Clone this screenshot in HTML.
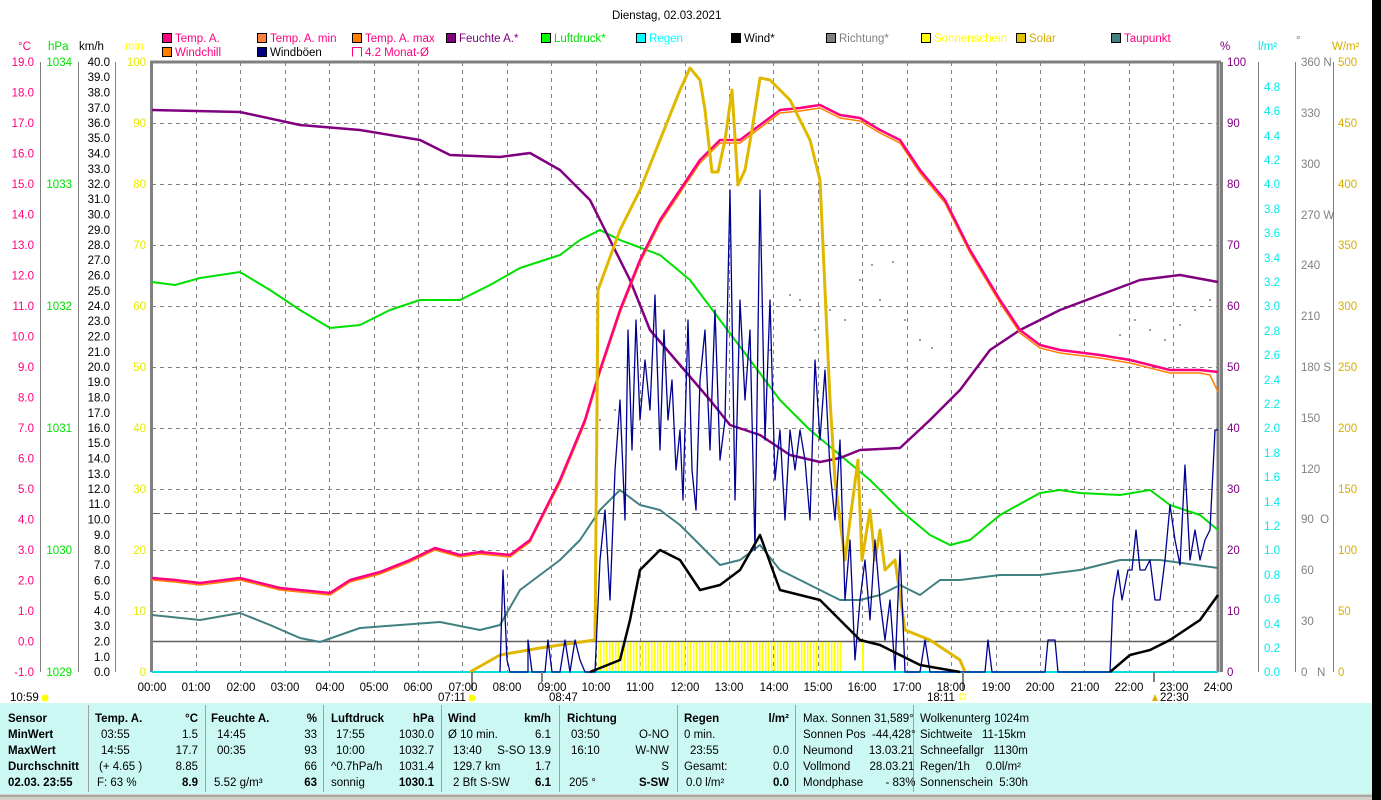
<!DOCTYPE html>
<html><head><meta charset="utf-8"><style>
html,body{margin:0;padding:0;background:#fff;width:1381px;height:800px;overflow:hidden}
svg{display:block}
text{font-family:"Liberation Sans",sans-serif;font-size:11.5px}
.b{font-weight:bold}
</style></head><body>
<svg width="1381" height="800" viewBox="0 0 1381 800">
<rect x="1372" y="0" width="9" height="800" fill="#000"/>
<text x="612" y="19" font-size="14">Dienstag, 02.03.2021</text>
<!-- legend -->
<g stroke="#000" stroke-width="1">
<rect x="162.5" y="33.5" width="9" height="9" fill="#ff0080"/>
<rect x="257.5" y="33.5" width="9" height="9" fill="#ff8040"/>
<rect x="352.5" y="33.5" width="9" height="9" fill="#ff8000"/>
<rect x="446.5" y="33.5" width="9" height="9" fill="#800080"/>
<rect x="541.5" y="33.5" width="9" height="9" fill="#00ff00"/>
<rect x="636.5" y="33.5" width="9" height="9" fill="#00ffff"/>
<rect x="731.5" y="33.5" width="9" height="9" fill="#000"/>
<rect x="826.5" y="33.5" width="9" height="9" fill="#808080"/>
<rect x="921.5" y="33.5" width="9" height="9" fill="#ffff00"/>
<rect x="1016.5" y="33.5" width="9" height="9" fill="#e0c000"/>
<rect x="1111.5" y="33.5" width="9" height="9" fill="#408080"/>
<rect x="162.5" y="47.5" width="9" height="9" fill="#ff8000"/>
<rect x="257.5" y="47.5" width="9" height="9" fill="#000080"/>
</g>
<path d="M352.5 56.5V47.5H361.5V56.5" fill="none" stroke="#ff0080"/>
<g>
<text x="175" y="42" fill="#ff0080">Temp. A.</text>
<text x="270" y="42" fill="#ff0080">Temp. A. min</text>
<text x="365" y="42" fill="#ff0080">Temp. A. max</text>
<text x="459" y="42" fill="#800080">Feuchte A.*</text>
<text x="554" y="42" fill="#00e000">Luftdruck*</text>
<text x="649" y="42" fill="#00ffff">Regen</text>
<text x="744" y="42" fill="#000">Wind*</text>
<text x="839" y="42" fill="#808080">Richtung*</text>
<text x="934" y="42" fill="#ffff00">Sonnenschein</text>
<text x="1029" y="42" fill="#d4b000">Solar</text>
<text x="1124" y="42" fill="#ff0080">Taupunkt</text>
<text x="175" y="56" fill="#ff0080">Windchill</text>
<text x="270" y="56" fill="#000">Windböen</text>
<text x="365" y="56" fill="#ff0080">4.2 Monat-Ø</text>
</g>
<!-- axis headers -->
<text x="18" y="50" fill="#ff0080">°C</text>
<text x="48" y="50" fill="#00e000">hPa</text>
<text x="79" y="50" fill="#000">km/h</text>
<text x="125" y="50" fill="#ffff00">min</text>
<text x="1220" y="50" fill="#800080">%</text>
<text x="1258" y="50" fill="#00e0e0">l/m²</text>
<text x="1296" y="44" fill="#808080">°</text>
<text x="1332" y="50" fill="#d4b000">W/m²</text>
<!-- grid -->
<g stroke="#808080" stroke-dasharray="4,4" stroke-width="1">
<path d="M196.5 62V672M240.5 62V672M285.5 62V672M329.5 62V672M374.5 62V672M418.5 62V672M462.5 62V672M507.5 62V672M551.5 62V672M596.5 62V672M640.5 62V672M685.5 62V672M729.5 62V672M773.5 62V672M818.5 62V672M862.5 62V672M907.5 62V672M951.5 62V672M996.5 62V672M1040.5 62V672M1084.5 62V672M1129.5 62V672M1173.5 62V672"/>
<path d="M152 123.5H1218M152 184.5H1218M152 245.5H1218M152 306.5H1218M152 367.5H1218M152 428.5H1218M152 489.5H1218M152 550.5H1218M152 611.5H1218"/>
</g>
<path d="M152 513.5H1218" stroke="#606060" stroke-dasharray="8,4"/>
<path d="M152 641.5H1218" stroke="#606060" stroke-width="1.5"/>
<path d="M150 62H1221M151.5 62V672M1218 62V672M1221.5 62V672" stroke="#808080" stroke-width="3" fill="none"/>
<!-- left axes -->
<g stroke="#808080"><path d="M40.5 62V672M78.5 62V672M115.5 62V672"/></g>
<g fill="#ff0080" text-anchor="end">
<text x="34" y="66">19.0</text><text x="34" y="96.5">18.0</text><text x="34" y="127">17.0</text><text x="34" y="157.5">16.0</text><text x="34" y="188">15.0</text><text x="34" y="218.5">14.0</text><text x="34" y="249">13.0</text><text x="34" y="279.5">12.0</text><text x="34" y="310">11.0</text><text x="34" y="340.5">10.0</text><text x="34" y="371">9.0</text><text x="34" y="401.5">8.0</text><text x="34" y="432">7.0</text><text x="34" y="462.5">6.0</text><text x="34" y="493">5.0</text><text x="34" y="523.5">4.0</text><text x="34" y="554">3.0</text><text x="34" y="584.5">2.0</text><text x="34" y="615">1.0</text><text x="34" y="645.5">0.0</text><text x="34" y="676">-1.0</text>
</g>
<g fill="#00e000" text-anchor="end">
<text x="72" y="66">1034</text><text x="72" y="188">1033</text><text x="72" y="310">1032</text><text x="72" y="432">1031</text><text x="72" y="554">1030</text><text x="72" y="676">1029</text>
</g>
<g fill="#000" text-anchor="end" font-size="11">
<text x="110" y="66">40.0</text><text x="110" y="81">39.0</text><text x="110" y="96.5">38.0</text><text x="110" y="112">37.0</text><text x="110" y="127">36.0</text><text x="110" y="142">35.0</text><text x="110" y="157.5">34.0</text><text x="110" y="173">33.0</text><text x="110" y="188">32.0</text><text x="110" y="203">31.0</text><text x="110" y="218.5">30.0</text><text x="110" y="234">29.0</text><text x="110" y="249">28.0</text><text x="110" y="264">27.0</text><text x="110" y="279.5">26.0</text><text x="110" y="295">25.0</text><text x="110" y="310">24.0</text><text x="110" y="325">23.0</text><text x="110" y="340.5">22.0</text><text x="110" y="356">21.0</text><text x="110" y="371">20.0</text><text x="110" y="386">19.0</text><text x="110" y="401.5">18.0</text><text x="110" y="417">17.0</text><text x="110" y="432">16.0</text><text x="110" y="447">15.0</text><text x="110" y="462.5">14.0</text><text x="110" y="478">13.0</text><text x="110" y="493">12.0</text><text x="110" y="508">11.0</text><text x="110" y="523.5">10.0</text><text x="110" y="539">9.0</text><text x="110" y="554">8.0</text><text x="110" y="569">7.0</text><text x="110" y="584.5">6.0</text><text x="110" y="600">5.0</text><text x="110" y="615">4.0</text><text x="110" y="630">3.0</text><text x="110" y="645.5">2.0</text><text x="110" y="661">1.0</text><text x="110" y="676">0.0</text>
</g>
<g fill="#e8e800" text-anchor="end">
<text x="146" y="66">100</text><text x="146" y="127">90</text><text x="146" y="188">80</text><text x="146" y="249">70</text><text x="146" y="310">60</text><text x="146" y="371">50</text><text x="146" y="432">40</text><text x="146" y="493">30</text><text x="146" y="554">20</text><text x="146" y="615">10</text><text x="146" y="676">0</text>
</g>
<!-- right axes -->
<g stroke="#808080"><path d="M1258.5 62V672M1295.5 62V672M1333.5 62V672"/></g>
<g fill="#800080">
<text x="1227" y="66">100</text><text x="1227" y="127">90</text><text x="1227" y="188">80</text><text x="1227" y="249">70</text><text x="1227" y="310">60</text><text x="1227" y="371">50</text><text x="1227" y="432">40</text><text x="1227" y="493">30</text><text x="1227" y="554">20</text><text x="1227" y="615">10</text><text x="1227" y="676">0</text>
</g>
<g fill="#00e8e8" font-size="11">
<text x="1264" y="91">4.8</text><text x="1264" y="115">4.6</text><text x="1264" y="140">4.4</text><text x="1264" y="164">4.2</text><text x="1264" y="188">4.0</text><text x="1264" y="213">3.8</text><text x="1264" y="237">3.6</text><text x="1264" y="262">3.4</text><text x="1264" y="286">3.2</text><text x="1264" y="310">3.0</text><text x="1264" y="335">2.8</text><text x="1264" y="359">2.6</text><text x="1264" y="384">2.4</text><text x="1264" y="408">2.2</text><text x="1264" y="432">2.0</text><text x="1264" y="457">1.8</text><text x="1264" y="481">1.6</text><text x="1264" y="506">1.4</text><text x="1264" y="530">1.2</text><text x="1264" y="554">1.0</text><text x="1264" y="579">0.8</text><text x="1264" y="603">0.6</text><text x="1264" y="628">0.4</text><text x="1264" y="652">0.2</text><text x="1264" y="676">0.0</text>
</g>
<g fill="#808080">
<text x="1301" y="66">360 N</text><text x="1301" y="117">330</text><text x="1301" y="168">300</text><text x="1301" y="219">270 W</text><text x="1301" y="269">240</text><text x="1301" y="320">210</text><text x="1301" y="371">180 S</text><text x="1301" y="422">150</text><text x="1301" y="473">120</text><text x="1301" y="523">90&#160; O</text><text x="1301" y="574">60</text><text x="1301" y="625">30</text><text x="1301" y="676">0&#160;&#160; N</text>
</g>
<g fill="#d4b000">
<text x="1338" y="66">500</text><text x="1338" y="127">450</text><text x="1338" y="188">400</text><text x="1338" y="249">350</text><text x="1338" y="310">300</text><text x="1338" y="371">250</text><text x="1338" y="432">200</text><text x="1338" y="493">150</text><text x="1338" y="554">100</text><text x="1338" y="615">50</text><text x="1338" y="676">0</text>
</g>
<!-- sunshine bars -->
<defs><pattern id="sb" width="3" height="30" patternUnits="userSpaceOnUse"><rect width="1.5" height="30" fill="#ffff00"/></pattern></defs>
<rect x="598" y="642" width="243" height="30" fill="url(#sb)"/>
<rect x="862" y="642" width="2" height="30" fill="#ffff00"/>
<path d="M152 672H1218" stroke="#00e0e0" stroke-width="2"/>
<!-- direction dots -->
<g fill="#808080">
<circle cx="600" cy="420" r="1"/><circle cx="615" cy="410" r="1"/><circle cx="650" cy="400" r="1"/><circle cx="770" cy="350" r="1"/><circle cx="790" cy="295" r="1"/><circle cx="800" cy="300" r="1"/><circle cx="815" cy="330" r="1"/><circle cx="830" cy="310" r="1"/><circle cx="845" cy="320" r="1"/><circle cx="860" cy="280" r="1"/><circle cx="872" cy="265" r="1"/><circle cx="880" cy="300" r="1"/><circle cx="893" cy="262" r="1"/><circle cx="905" cy="320" r="1"/><circle cx="920" cy="340" r="1"/><circle cx="932" cy="348" r="1"/><circle cx="1120" cy="335" r="1"/><circle cx="1135" cy="320" r="1"/><circle cx="1150" cy="330" r="1"/><circle cx="1165" cy="340" r="1"/><circle cx="1180" cy="325" r="1"/><circle cx="1195" cy="310" r="1"/><circle cx="1210" cy="300" r="1"/>
</g>
<!-- series -->
<g fill="none" stroke-linejoin="round">
<polyline stroke="#408080" stroke-width="2" points="152,615 200,620 240,613 270,625 300,638 320,642 360,628 400,625 440,622 480,630 500,625 520,590 560,560 580,540 600,510 620,490 640,505 660,510 680,525 700,545 720,565 740,560 760,545 780,570 800,580 820,590 840,600 860,600 880,595 900,585 920,595 940,580 960,580 1000,575 1040,575 1080,570 1120,560 1160,560 1218,568"/>
<polyline stroke="#00e000" stroke-width="2" points="152,282 175,285 200,278 240,272 270,290 300,310 330,328 360,325 390,310 420,300 460,300 490,285 520,268 560,255 580,240 600,230 620,240 660,255 690,280 720,320 750,360 780,400 810,430 840,455 870,480 900,510 930,535 950,545 970,540 1000,515 1040,493 1060,490 1080,493 1120,495 1150,490 1170,505 1200,515 1218,530"/>
<polyline stroke="#800080" stroke-width="2.5" points="152,110 240,112 300,125 360,130 420,140 450,155 500,157 530,153 560,170 590,200 610,240 630,280 650,330 680,365 710,400 730,425 760,435 790,455 820,462 840,458 860,450 900,448 930,420 960,390 990,350 1020,330 1060,310 1100,295 1140,280 1180,275 1218,282"/>
<polyline stroke="#ff8000" stroke-width="1.5" points="152,580 175,582 200,585 240,580 280,590 330,595 350,582 380,574 410,562 435,550 460,557 480,554 510,557 530,542 560,483 585,423 600,373 620,313 640,263 660,223 680,193 700,163 720,143 740,143 760,128 780,113 800,111 820,108 840,118 860,121 880,133 900,143 920,173 945,203 970,253 1000,303 1020,333 1040,348 1060,353 1100,358 1130,363 1170,373 1200,373 1210,375 1218,392"/>
<polyline stroke="#ff0080" stroke-width="2.5" points="152,578 175,580 200,583 240,578 280,588 330,593 350,580 380,572 410,560 435,548 460,555 480,552 510,555 530,540 560,480 585,420 600,370 620,310 640,260 660,220 680,190 700,160 720,140 740,140 760,125 780,110 800,108 820,105 840,115 860,118 880,130 900,140 920,170 945,200 970,250 1000,300 1020,330 1040,345 1060,350 1100,355 1130,360 1170,370 1200,370 1218,372"/>
<polyline stroke="#e0b800" stroke-width="3" points="470,672 500,655 540,648 560,645 595,640 598,290 620,230 640,190 660,140 680,90 690,68 700,80 705,110 712,172 718,172 725,140 732,90 738,185 745,170 752,130 760,78 770,80 790,100 810,140 820,180 830,400 835,480 845,560 850,520 858,460 862,560 870,510 875,560 880,530 885,570 895,560 905,630 930,640 960,660 965,672"/>
<polyline stroke="#000090" stroke-width="1.3" points="500,672 503,570 507,660 510,672 528,672 528,640 532,672 545,672 548,640 552,672 560,672 565,640 570,672 575,640 580,660 585,672 595,672 600,560 605,510 610,600 615,470 620,400 625,520 628,330 632,450 636,320 640,420 645,360 650,410 655,295 660,450 664,330 668,420 672,380 676,470 680,430 683,500 688,320 692,470 696,510 700,380 705,330 710,450 715,310 720,460 725,420 730,190 735,500 740,300 745,400 750,330 755,550 760,190 765,440 770,300 775,480 780,430 785,520 790,430 795,470 800,430 805,460 810,520 815,360 820,440 825,370 830,470 835,520 840,440 845,600 850,540 855,660 860,600 865,560 870,620 875,540 880,600 885,640 890,600 895,670 900,550 905,672 920,672 925,640 930,672 985,672 988,640 992,672 1045,672 1048,640 1055,640 1058,672 1110,672 1113,600 1118,570 1122,600 1128,570 1132,570 1136,530 1140,570 1145,570 1150,560 1155,600 1160,600 1165,560 1170,505 1175,540 1180,565 1185,465 1190,560 1195,530 1200,560 1205,540 1210,530 1215,430 1218,430"/>
<polyline stroke="#000" stroke-width="2.5" points="590,672 620,660 630,620 640,570 660,550 680,560 700,590 720,585 740,570 760,535 780,590 800,595 820,600 840,620 860,640 880,645 900,655 920,665 960,672"/>
<polyline stroke="#000" stroke-width="2.5" points="1110,672 1130,655 1150,650 1170,640 1200,620 1218,595"/>
</g>
<path d="M1154 672V682M542 672V682M472 672V690M963 672V690" stroke="#808080" stroke-width="2"/>
<!-- hours -->
<g fill="#000" text-anchor="middle">
<text x="152" y="691">00:00</text><text x="196" y="691">01:00</text><text x="241" y="691">02:00</text><text x="285" y="691">03:00</text><text x="330" y="691">04:00</text><text x="374" y="691">05:00</text><text x="418" y="691">06:00</text><text x="463" y="691">07:00</text><text x="507" y="691">08:00</text><text x="552" y="691">09:00</text><text x="596" y="691">10:00</text><text x="640" y="691">11:00</text><text x="685" y="691">12:00</text><text x="729" y="691">13:00</text><text x="774" y="691">14:00</text><text x="818" y="691">15:00</text><text x="862" y="691">16:00</text><text x="907" y="691">17:00</text><text x="951" y="691">18:00</text><text x="996" y="691">19:00</text><text x="1040" y="691">20:00</text><text x="1085" y="691">21:00</text><text x="1129" y="691">22:00</text><text x="1174" y="691">23:00</text><text x="1218" y="691">24:00</text>
</g>
<text x="10" y="701">10:59</text><circle cx="45" cy="698" r="3.5" fill="#ffff00"/>
<text x="438" y="701">07:11</text><circle cx="472" cy="698" r="3.5" fill="#ffff00"/>
<text x="549" y="701">08:47</text>
<text x="927" y="701">18:11</text><rect x="960" y="694" width="5" height="5" fill="none" stroke="#ffff00"/>
<text x="1160" y="701">22:30</text><path d="M1155 694l-3 7h6z" fill="#e0b000"/>
<!-- bottom panel -->
<rect x="0" y="703" width="1372" height="91" fill="#ccf8f4"/>
<rect x="0" y="794" width="1372" height="6" fill="#d4d0c8"/>
<path d="M0 796H1372" stroke="#808080"/>
<g stroke="#a0a0a0"><path d="M88.5 705V792M205.5 705V792M323.5 705V792M441.5 705V792M559.5 705V792M677.5 705V792M795.5 705V792M913.5 705V792"/></g>
<g fill="#000">
<text x="8" y="722" class="b">Sensor</text><text x="8" y="738" class="b">MinWert</text><text x="8" y="754" class="b">MaxWert</text><text x="8" y="770" class="b">Durchschnitt</text><text x="8" y="786" class="b">02.03. 23:55</text>
<text x="95" y="722" class="b">Temp. A.</text><text x="101" y="738">03:55</text><text x="101" y="754">14:55</text><text x="99" y="770">(+ 4.65 )</text><text x="97" y="786">F: 63 %</text>
<g text-anchor="end"><text x="198" y="722" class="b">°C</text><text x="198" y="738">1.5</text><text x="198" y="754">17.7</text><text x="198" y="770">8.85</text><text x="198" y="786" class="b">8.9</text></g>
<text x="211" y="722" class="b">Feuchte A.</text><text x="217" y="738">14:45</text><text x="217" y="754">00:35</text><text x="214" y="786">5.52 g/m³</text>
<g text-anchor="end"><text x="317" y="722" class="b">%</text><text x="317" y="738">33</text><text x="317" y="754">93</text><text x="317" y="770">66</text><text x="317" y="786" class="b">63</text></g>
<text x="331" y="722" class="b">Luftdruck</text><text x="336" y="738">17:55</text><text x="336" y="754">10:00</text><text x="331" y="770">^0.7hPa/h</text><text x="331" y="786">sonnig</text>
<g text-anchor="end"><text x="434" y="722" class="b">hPa</text><text x="434" y="738">1030.0</text><text x="434" y="754">1032.7</text><text x="434" y="770">1031.4</text><text x="434" y="786" class="b">1030.1</text></g>
<text x="448" y="722" class="b">Wind</text><text x="448" y="738">Ø 10 min.</text><text x="453" y="754">13:40</text><text x="453" y="770">129.7 km</text><text x="453" y="786">2 Bft S-SW</text>
<g text-anchor="end"><text x="551" y="722" class="b">km/h</text><text x="551" y="738">6.1</text><text x="551" y="754">S-SO 13.9</text><text x="551" y="770">1.7</text><text x="551" y="786" class="b">6.1</text></g>
<text x="567" y="722" class="b">Richtung</text><text x="571" y="738">03:50</text><text x="571" y="754">16:10</text><text x="569" y="786">205 °</text>
<g text-anchor="end"><text x="669" y="738">O-NO</text><text x="669" y="754">W-NW</text><text x="669" y="770">S</text><text x="669" y="786" class="b">S-SW</text></g>
<text x="684" y="722" class="b">Regen</text><text x="684" y="738">0 min.</text><text x="690" y="754">23:55</text><text x="684" y="770">Gesamt:</text><text x="686" y="786">0.0 l/m²</text>
<g text-anchor="end"><text x="789" y="722" class="b">l/m²</text><text x="789" y="754">0.0</text><text x="789" y="770">0.0</text><text x="789" y="786" class="b">0.0</text></g>
<text x="803" y="722">Max. Sonnen 31,589°</text><text x="803" y="738">Sonnen Pos&#160; -44,428°</text><text x="803" y="754">Neumond&#160;&#160;&#160;&#160; 13.03.21</text><text x="803" y="770">Vollmond&#160;&#160;&#160;&#160;&#160; 28.03.21</text><text x="803" y="786">Mondphase&#160;&#160;&#160;&#160;&#160;&#160; - 83%</text>
<text x="920" y="722">Wolkenunterg 1024m</text><text x="920" y="738">Sichtweite&#160;&#160; 11-15km</text><text x="920" y="754">Schneefallgr&#160;&#160; 1130m</text><text x="920" y="770">Regen/1h&#160;&#160;&#160;&#160; 0.0l/m²</text><text x="920" y="786">Sonnenschein&#160; 5:30h</text>
</g>
</svg>
</body></html>
